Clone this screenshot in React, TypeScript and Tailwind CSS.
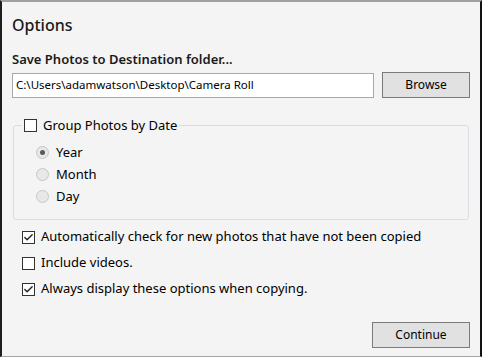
import { Check } from 'lucide-react';

function Box({ checked }: { checked?: boolean }) {
  return (
    <span className="flex h-[13px] w-[13px] shrink-0 items-center justify-center border border-[#333333] bg-white">
      {checked && <Check className="h-[11px] w-[11px] text-[#1f1f1f]" strokeWidth={3} />}
    </span>
  );
}

function Radio({ selected, label }: { selected?: boolean; label: string }) {
  return (
    <div className="flex h-[22px] items-center gap-[7px]">
      <span className="flex h-[13px] w-[13px] items-center justify-center rounded-full border border-[#c6c6c6] bg-[#e8e8e8]">
        {selected && <span className="h-[5px] w-[5px] rounded-full bg-[#5a5a5a]" />}
      </span>
      <span className="text-[13px] text-black">{label}</span>
    </div>
  );
}

export default function App() {
  return (
    <div className="h-[359px] w-[482px] bg-white font-['Noto_Sans',sans-serif]">
      <div className="flex h-[357px] w-[482px] flex-col border-b border-l-2 border-r-2 border-t-2 border-b-[#a5a5a5] border-l-[#1e1e1e] border-r-[#111111] border-t-[#a0a0a0] bg-[#f4f4f4] px-[10px]">
        <h1 className="mt-[11px] text-[16px] leading-[24px] font-medium text-[#1a1a1a]">Options</h1>

        <div className="mt-[13px] text-[13px] leading-[19px] font-semibold text-[#1a1a1a]">
          Save Photos to Destination folder...
        </div>

        <div className="mt-[3px] flex items-center gap-[8px]">
          <div className="flex h-[25px] w-[363px] items-center border border-[#a8a8a8] bg-white px-[3px] text-[11.5px] text-black">
            C:\Users\adamwatson\Desktop\Camera Roll
          </div>
          <button className="h-[26px] w-[88px] border border-[#7a7a7a] bg-[#e1e1e1] text-[12px] text-black">
            Browse
          </button>
        </div>

        <fieldset className="mt-[18px] ml-[1px] h-[104px] w-[456px] rounded-[3px] border border-[#d9dde3] px-[22px]">
          <legend className="-ml-[14px] flex items-center gap-[6px] px-[2px] text-[13px] text-black">
            <Box />
            Group Photos by Date
          </legend>
          <div className="mt-[6px] flex flex-col">
            <Radio selected label="Year" />
            <Radio label="Month" />
            <Radio label="Day" />
          </div>
        </fieldset>

        <div className="mt-[4px] flex flex-col pl-[10px] text-[13px] text-black">
          <label className="flex h-[26px] items-center gap-[6px]">
            <Box checked />
            Automatically check for new photos that have not been copied
          </label>
          <label className="flex h-[26px] items-center gap-[6px]">
            <Box />
            Include videos.
          </label>
          <label className="flex h-[26px] items-center gap-[6px]">
            <Box checked />
            Always display these options when copying.
          </label>
        </div>

        <div className="mt-auto mb-[8px] flex justify-end">
          <button className="h-[26px] w-[98px] border border-[#7a7a7a] bg-[#e1e1e1] text-[12px] text-black">
            Continue
          </button>
        </div>
      </div>
    </div>
  );
}
